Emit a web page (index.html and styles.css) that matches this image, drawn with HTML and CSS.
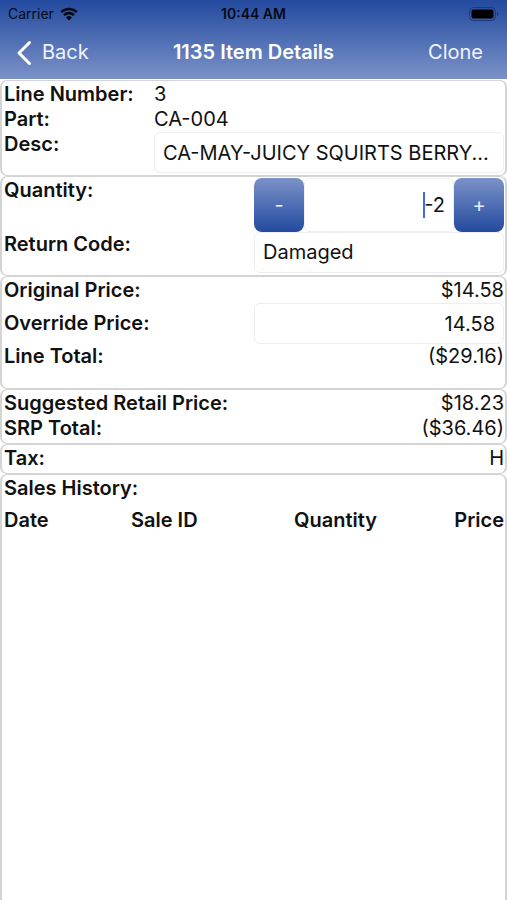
FILE: index.html
```
<!DOCTYPE html>
<html lang="en">
<head>
<meta charset="utf-8">
<meta name="viewport" content="width=device-width, initial-scale=1">
<title>1135 Item Details</title>
<link rel="stylesheet" href="styles.css">
</head>
<body>
<header class="top">
  <div class="status">
    <span class="carrier">Carrier
      <svg width="18" height="14" viewBox="0 0 18 14" aria-hidden="true">
        <path d="M1.2 5.1a11.2 11.2 0 0 1 15.6 0M4 8.1a7.2 7.2 0 0 1 10 0" fill="none" stroke="#050a18" stroke-width="2.6"/>
        <path d="M9 13.4 6 10.4a4.3 4.3 0 0 1 6 0z" fill="#050a18"/>
      </svg>
    </span>
    <span class="time">10:44 AM</span>
    <svg class="battery" width="30" height="14" viewBox="0 0 30 14" aria-hidden="true">
      <rect x=".5" y=".5" width="26" height="13" rx="4" fill="none" stroke="#1d3878"/>
      <rect x="2.5" y="2.5" width="22" height="9" rx="2" fill="#000"/>
      <path d="M28 5v4q1.5-.6 1.5-2T28 5z" fill="#1d3878"/>
    </svg>
  </div>
  <nav class="nav">
    <a class="back" href="#back">
      <svg width="16" height="26" viewBox="0 0 16 26" aria-hidden="true"><path d="M13.5 2.5 3 13l10.500 10.500" fill="none" stroke="#fff" stroke-width="3" stroke-linecap="round" stroke-linejoin="round"/></svg>
      Back
    </a>
    <h1>1135 Item Details</h1>
    <a class="clone" href="#clone">Clone</a>
  </nav>
</header>
<main>
  <section class="card info">
    <span class="label">Line Number:</span><span>3</span>
    <span class="label">Part:</span><span>CA-004</span>
    <label class="label" for="desc">Desc:</label><input class="field" id="desc" value="CA-MAY-JUICY SQUIRTS BERRY...">
  </section>
  <section class="card halves">
    <label class="label" for="qty">Quantity:</label>
    <div class="stepper">
      <button type="button" aria-label="Decrease">-</button>
      <div class="qty"><input class="field number" id="qty" value="-2"><span class="caret"></span></div>
      <button type="button" aria-label="Increase">+</button>
    </div>
    <label class="label" for="code">Return Code:</label>
    <select class="field" id="code"><option>Damaged</option></select>
  </section>
  <section class="card halves prices">
    <span class="label">Original Price:</span><span class="value">$14.58</span>
    <label class="label middle" for="override">Override Price:</label><input class="field number" id="override" value="14.58">
    <span class="label">Line Total:</span><span class="value">($29.16)</span>
  </section>
  <section class="card halves">
    <span class="label">Suggested Retail Price:</span><span class="value">$18.23</span>
    <span class="label">SRP Total:</span><span class="value">($36.46)</span>
  </section>
  <section class="card halves">
    <span class="label">Tax:</span><span class="value">H</span>
  </section>
  <section class="card history">
    <h2>Sales History:</h2>
    <table>
      <thead><tr><th scope="col">Date</th><th scope="col">Sale ID</th><th scope="col">Quantity</th><th scope="col">Price</th></tr></thead>
    </table>
  </section>
</main>
</body>
</html>
```
FILE: styles.css
```
* { box-sizing: border-box; }
body {
  margin: 0;
  min-height: 100vh;
  display: flex;
  flex-direction: column;
  background: #fff;
  color: #111;
  font: 20px/25px Inter, "Liberation Sans", sans-serif;
}
.top {
  margin-bottom: 1px;
  background: linear-gradient(#234a9f, #7b92c8);
}
.status {
  display: grid;
  grid-template-columns: 1fr auto 1fr;
  align-items: center;
  height: 27px;
  padding: 0 8px;
  color: #050a18;
  font-size: 14px;
}
.carrier { display: flex; align-items: center; gap: 6px; }
.time { font-weight: 600; }
.battery { justify-self: end; }
.nav {
  display: grid;
  grid-template-columns: 1fr auto 1fr;
  align-items: center;
  height: 52px;
  padding: 0 16px 1px;
  color: #fff;
}
.nav a { color: #f0f4ff; text-decoration: none; }
.back { display: flex; align-items: center; gap: 10px; }
.nav .clone { justify-self: end; padding-right: 8px; }
h1, h2 { margin: 0; font-size: 20px; font-weight: 600; }
main { flex: 1; display: flex; flex-direction: column; }
.card {
  display: grid;
  padding: 1px 1px 2px 2px;
  border: solid #d4d4d4;
  border-width: 1px 2px;
  border-radius: 7px;
}
.info { grid-template-columns: 150px 1fr; }
.halves { grid-template-columns: 1fr 1fr; }
.prices { padding-bottom: 19px; }
.label { font-weight: 600; }
.middle { align-self: center; }
.value { text-align: right; }
.field {
  width: 100%;
  min-width: 0;
  height: 41px;
  margin: 0;
  padding: 0 8px;
  border: 1px solid #eee;
  border-radius: 6px;
  background: #fff;
  color: #111;
  font: inherit;
  appearance: none;
  outline: none;
}
.number { text-align: right; }
.stepper { display: grid; grid-template-columns: 50px 1fr 50px; height: 54px; }
.stepper button {
  padding: 0;
  border: 0;
  border-radius: 8px;
  background: linear-gradient(#7b92c8, #234a9f);
  color: #e4efff;
  font: inherit;
}
.qty { position: relative; }
.qty .field { height: 100%; }
.caret {
  position: absolute;
  top: 14px;
  right: 29px;
  width: 2px;
  height: 26px;
  background: #4169e1;
}
.history { flex: 1; align-content: start; gap: 7px; border-bottom: 0; border-radius: 7px 7px 0 0; }
table { width: 100%; border-collapse: collapse; table-layout: fixed; }
th { padding: 0 2px; font-weight: 600; text-align: right; }
th:first-child { padding-left: 0; text-align: left; }
th:nth-child(2) { text-align: left; }
th:last-child { padding-right: 0; }
```
